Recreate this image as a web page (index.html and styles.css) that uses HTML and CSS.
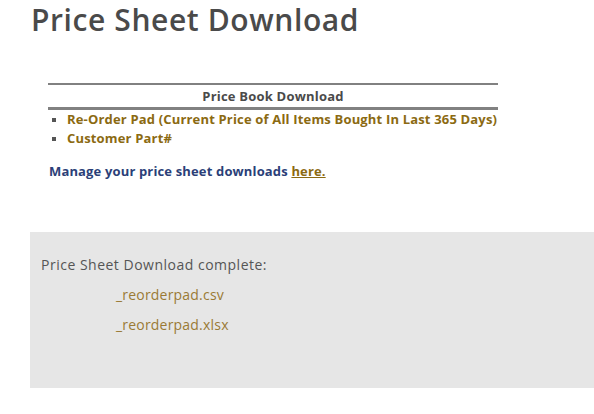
FILE: index.html
```html
<!DOCTYPE html>
<html>
<head>
<meta charset="utf-8">
<link rel="stylesheet" href="styles.css">
</head>
<body>
<div class="page">
  <h1 class="title">Price Sheet Download</h1>
  <div class="book">
    <div class="book-head">Price Book Download</div>
    <ul class="book-list">
      <li>Re-Order Pad (Current Price of All Items Bought In Last 365 Days)</li>
      <li>Customer Part#</li>
    </ul>
    <p class="manage">Manage your price sheet downloads <a href="#" class="here">here.</a></p>
  </div>
  <div class="done">
    <p class="done-title">Price Sheet Download complete:</p>
    <p class="file">_reorderpad.csv</p>
    <p class="file">_reorderpad.xlsx</p>
  </div>
</div>
</body>
</html>
```
FILE: styles.css
```css
html, body {
  margin: 0;
  padding: 0;
  background: #fff;
}
.page {
  font-family: "Open Sans", "DejaVu Sans", sans-serif;
  padding-left: 30px;
}
.title {
  margin: 0;
  padding: 2px 0 0 1px;
  font-size: 30px;
  line-height: 36px;
  font-weight: 600;
  letter-spacing: 0.6px;
  color: #4a4a4a;
}
.book {
  margin-top: 45px;
  margin-left: 18px;
  width: 450px;
}
.book-head {
  border-top: 2px solid #818181;
  border-bottom: 3px solid #818181;
  text-align: center;
  font-size: 13px;
  font-weight: 700;
  letter-spacing: 0.2px;
  color: #4a4a4a;
  line-height: 22px;
}
.book-list {
  margin: 0;
  padding: 0 0 0 19px;
  list-style: square;
  color: #8b6a12;
  font-size: 13px;
  font-weight: 700;
  letter-spacing: 0.17px;
  line-height: 19px;
}
.book-list li::marker {
  color: #555;
  font-size: 11px;
}
.manage {
  margin: 14px 0 0 1px;
  font-size: 13px;
  font-weight: 700;
  letter-spacing: 0.15px;
  color: #2b3f78;
  line-height: 18px;
}
.here {
  color: #8b6a12;
  text-decoration: underline;
}
.done {
  margin-top: 52px;
  background: #e6e6e6;
  height: 156px;
  padding: 24px 11px 0;
  box-sizing: border-box;
}
.done p {
  margin: 0;
}
.done-title {
  font-size: 14px;
  line-height: 18px;
  letter-spacing: 0.5px;
  color: #555;
}
.file {
  font-size: 14px;
  line-height: 18px;
  letter-spacing: 0.2px;
  color: #9a7a35;
  padding-left: 75px;
  margin-top: 12px !important;
}
```
